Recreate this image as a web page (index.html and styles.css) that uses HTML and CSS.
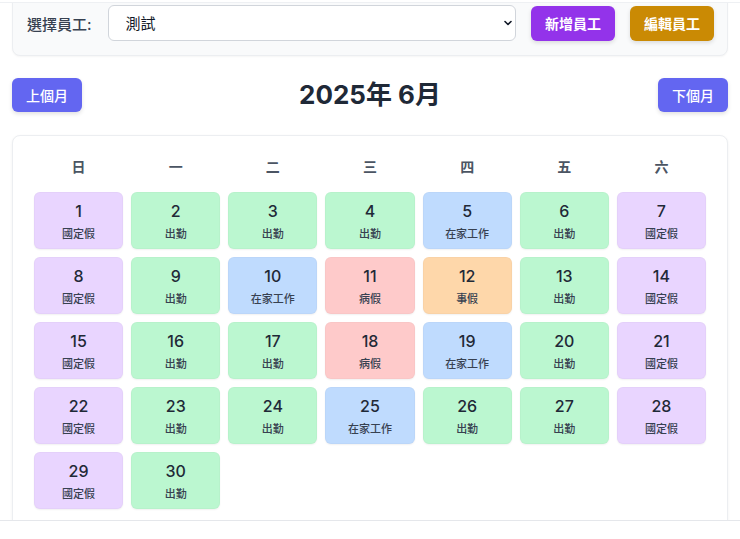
FILE: index.html
```html
<!DOCTYPE html>
<html lang="zh-Hant">
<head>
<meta charset="utf-8">
<title>員工出勤日曆</title>
<link rel="stylesheet" href="styles.css">
</head>
<body>
<div class="viewport">
  <div class="page">
    <div class="toolbar">
      <label class="tb-label" for="emp">選擇員工:</label>
      <div class="select-wrap">
        <select id="emp" class="select"><option>測試</option></select>
        <svg class="chev" width="10" height="10" viewBox="0 0 10 10"><path d="M2 3.5 L5 6.5 L8 3.5" fill="none" stroke="#111827" stroke-width="1.6" stroke-linecap="round" stroke-linejoin="round"/></svg>
      </div>
      <button class="btn btn-purple">新增員工</button>
      <button class="btn btn-amber">編輯員工</button>
    </div>

    <div class="nav">
      <button class="btn btn-indigo">上個月</button>
      <h1 class="title">2025年 6月</h1>
      <button class="btn btn-indigo">下個月</button>
    </div>

    <div class="calendar">
      <div class="weekdays">
        <div>日</div><div>一</div><div>二</div><div>三</div><div>四</div><div>五</div><div>六</div>
      </div>
      <div class="days">
        <div class="day holiday"><span class="num">1</span><span class="lbl">國定假</span></div>
        <div class="day work"><span class="num">2</span><span class="lbl">出勤</span></div>
        <div class="day work"><span class="num">3</span><span class="lbl">出勤</span></div>
        <div class="day work"><span class="num">4</span><span class="lbl">出勤</span></div>
        <div class="day home"><span class="num">5</span><span class="lbl">在家工作</span></div>
        <div class="day work"><span class="num">6</span><span class="lbl">出勤</span></div>
        <div class="day holiday"><span class="num">7</span><span class="lbl">國定假</span></div>

        <div class="day holiday"><span class="num">8</span><span class="lbl">國定假</span></div>
        <div class="day work"><span class="num">9</span><span class="lbl">出勤</span></div>
        <div class="day home"><span class="num">10</span><span class="lbl">在家工作</span></div>
        <div class="day sick"><span class="num">11</span><span class="lbl">病假</span></div>
        <div class="day personal"><span class="num">12</span><span class="lbl">事假</span></div>
        <div class="day work"><span class="num">13</span><span class="lbl">出勤</span></div>
        <div class="day holiday"><span class="num">14</span><span class="lbl">國定假</span></div>

        <div class="day holiday"><span class="num">15</span><span class="lbl">國定假</span></div>
        <div class="day work"><span class="num">16</span><span class="lbl">出勤</span></div>
        <div class="day work"><span class="num">17</span><span class="lbl">出勤</span></div>
        <div class="day sick"><span class="num">18</span><span class="lbl">病假</span></div>
        <div class="day home"><span class="num">19</span><span class="lbl">在家工作</span></div>
        <div class="day work"><span class="num">20</span><span class="lbl">出勤</span></div>
        <div class="day holiday"><span class="num">21</span><span class="lbl">國定假</span></div>

        <div class="day holiday"><span class="num">22</span><span class="lbl">國定假</span></div>
        <div class="day work"><span class="num">23</span><span class="lbl">出勤</span></div>
        <div class="day work"><span class="num">24</span><span class="lbl">出勤</span></div>
        <div class="day home"><span class="num">25</span><span class="lbl">在家工作</span></div>
        <div class="day work"><span class="num">26</span><span class="lbl">出勤</span></div>
        <div class="day work"><span class="num">27</span><span class="lbl">出勤</span></div>
        <div class="day holiday"><span class="num">28</span><span class="lbl">國定假</span></div>

        <div class="day holiday"><span class="num">29</span><span class="lbl">國定假</span></div>
        <div class="day work"><span class="num">30</span><span class="lbl">出勤</span></div>
      </div>
    </div>
  </div>
</div>
</body>
</html>
```

FILE: styles.css
```css
* { box-sizing: border-box; }

html, body {
  margin: 0;
  padding: 0;
  background: #ffffff;
  font-family: Inter, "Noto Sans CJK TC", "Noto Sans", sans-serif;
  color: #1f2937;
}

.viewport {
  margin-top: 2px;
  height: 519px;
  border-top: 1px solid #eef0f3;
  border-bottom: 1px solid #e5e7eb;
  overflow: hidden;
}

.page {
  padding: 0 12px;
  margin-top: -15px;
}

.toolbar {
  display: flex;
  align-items: center;
  gap: 15px;
  padding: 16px 13px 14px 14px;
  background: #f9fafb;
  border: 1px solid #eceef1;
  border-radius: 8px;
  box-shadow: 0 1px 2px rgba(0, 0, 0, 0.04);
}

.tb-label {
  font-size: 15px;
  color: #374151;
  font-weight: 500;
  padding-right: 1px;
}

.select-wrap {
  position: relative;
  flex: 1;
  display: flex;
}

.select {
  appearance: none;
  -webkit-appearance: none;
  width: 100%;
  height: 36px;
  border: 1px solid #d1d5db;
  border-radius: 6px;
  background: #ffffff;
  padding: 0 17px;
  font-family: inherit;
  font-size: 15px;
  color: #111827;
}

.chev {
  position: absolute;
  right: 3px;
  top: 13px;
}

.btn {
  border: none;
  border-radius: 6px;
  color: #ffffff;
  font-family: inherit;
  font-size: 14px;
  font-weight: 700;
  padding: 0 14px;
  height: 35px;
  box-shadow: 0 2px 4px rgba(0, 0, 0, 0.12);
  white-space: nowrap;
}

.btn-purple { background: #9333ea; }
.btn-amber { background: #ca8a04; }
.btn-indigo {
  background: #6366f1;
  font-weight: 500;
  height: 34px;
}

.nav {
  display: flex;
  align-items: center;
  justify-content: space-between;
  margin-top: 22px;
}

.title {
  margin: 0;
  font-size: 26px;
  line-height: 34px;
  font-weight: 700;
  color: #1f2937;
}

.calendar {
  margin-top: 23px;
  border: 1px solid #eceef1;
  border-radius: 8px;
  background: #ffffff;
  padding: 21px 21px 40px;
  box-shadow: 0 1px 3px rgba(0, 0, 0, 0.06);
}

.weekdays {
  display: grid;
  grid-template-columns: repeat(7, 1fr);
  gap: 8px;
  text-align: center;
  font-size: 14px;
  font-weight: 600;
  color: #4b5563;
  line-height: 20px;
  margin-bottom: 15px;
}

.days {
  display: grid;
  grid-template-columns: repeat(7, 1fr);
  gap: 8px;
}

.day {
  height: 57px;
  border-radius: 6px;
  display: flex;
  flex-direction: column;
  align-items: center;
  padding-top: 7px;
  box-shadow: 0 1px 2px rgba(0, 0, 0, 0.06);
  border: 1px solid rgba(0, 0, 0, 0.02);
}

.num {
  font-size: 16px;
  font-weight: 500;
  line-height: 22px;
  color: #1f2937;
}

.lbl {
  margin-top: 4px;
  font-size: 11px;
  line-height: 16px;
  font-weight: 500;
  color: #374151;
}

.holiday { background: #e9d5ff; }
.work { background: #bbf7d0; }
.home { background: #bfdbfe; }
.sick { background: #fecaca; }
.personal { background: #fed7aa; }
```
